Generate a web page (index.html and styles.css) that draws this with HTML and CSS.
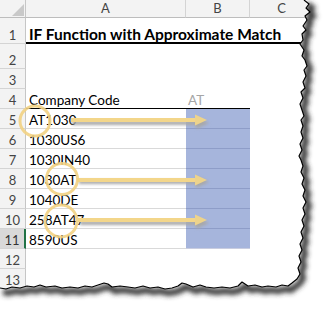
FILE: index.html
```html
<!DOCTYPE html>
<html>
<head>
<meta charset="utf-8">
<link rel="stylesheet" href="styles.css">
</head>
<body>
<div class="sheet">
  <div class="grid">
    <div class="corner"><span class="tri"></span></div>
    <div class="colhead">A</div>
    <div class="colhead">B</div>
    <div class="colhead">C</div>
    <div class="colhead"></div>

    <div class="rowhead">1</div>
    <div class="cell title r1">IF Function with Approximate Match</div>
    <div class="cell r1"></div>
    <div class="cell r1"></div>
    <div class="cell r1"></div>

    <div class="rowhead">2</div>
    <div class="cell"></div><div class="cell"></div><div class="cell"></div><div class="cell"></div>

    <div class="rowhead">3</div>
    <div class="cell"></div><div class="cell"></div><div class="cell"></div><div class="cell"></div>

    <div class="rowhead">4</div>
    <div class="cell hdr">Company Code</div>
    <div class="cell hdr grey">AT</div>
    <div class="cell"></div><div class="cell"></div>

    <div class="rowhead">5</div>
    <div class="cell data">AT1030</div><div class="cell blue"></div><div class="cell"></div><div class="cell"></div>

    <div class="rowhead">6</div>
    <div class="cell data">1030US6</div><div class="cell blue"></div><div class="cell"></div><div class="cell"></div>

    <div class="rowhead">7</div>
    <div class="cell data">1030IN40</div><div class="cell blue"></div><div class="cell"></div><div class="cell"></div>

    <div class="rowhead">8</div>
    <div class="cell data">1030AT</div><div class="cell blue"></div><div class="cell"></div><div class="cell"></div>

    <div class="rowhead">9</div>
    <div class="cell data">1040DE</div><div class="cell blue"></div><div class="cell"></div><div class="cell"></div>

    <div class="rowhead">10</div>
    <div class="cell data">258AT47</div><div class="cell blue"></div><div class="cell"></div><div class="cell"></div>

    <div class="rowhead sel">11</div>
    <div class="cell data active">8590US</div><div class="cell blue lastblue"></div><div class="cell"></div><div class="cell"></div>

    <div class="rowhead">12</div>
    <div class="cell"></div><div class="cell"></div><div class="cell"></div><div class="cell"></div>

    <div class="rowhead">13</div>
    <div class="cell"></div><div class="cell"></div><div class="cell"></div><div class="cell"></div>

    <div class="rowhead">14</div>
    <div class="cell"></div><div class="cell"></div><div class="cell"></div><div class="cell"></div>
  </div>

  <svg class="overlay" width="326" height="313" viewBox="0 0 326 313" xmlns="http://www.w3.org/2000/svg">
    <defs>
      <filter id="blur" x="-20%" y="-20%" width="140%" height="140%">
        <feGaussianBlur stdDeviation="2.4"/>
      </filter>
      <filter id="ashadow" x="-10%" y="-100%" width="120%" height="300%">
        <feGaussianBlur stdDeviation="1.6"/>
      </filter>
      <clipPath id="outside">
        <path id="outpath" d="M304 0 L309 4 L306 8 L310 12 L305 16 L307 20 L303 26 L306 30 L302 34 L303 40 L300 44 L304 50 L302 56 L305 60 L307 66 L304 70 L306 76 L303 82 L305 88 L301 92 L303 98 L300 104 L302 110 L304 116 L301 120 L303 126 L301 132 L303 138 L300 144 L302 150 L299 156 L301 160 L303 166 L301 172 L304 178 L302 184 L305 190 L303 196 L306 202 L303 208 L305 214 L302 220 L304 226 L301 232 L303 238 L300 244 L302 250 L299 256 L301 262 L298 268 L300 274 L297 279 L292 283 L288 286 L282 285 L276 287 L268 286 L262 287 L255 285 L248 286 L242 282 L238 286 L230 288 L222 287 L214 288 L206 287 L200 285 L193 287 L186 284 L182 283 L178 286 L172 288 L165 289 L158 287 L150 288 L143 286 L135 288 L128 287 L120 286 L112 287 L108 284 L104 283 L98 285 L92 287 L85 286 L78 288 L70 287 L62 288 L55 286 L46 287 L40 285 L34 287 L27 286 L20 288 L12 287 L6 289 L0 288 L0 313 L326 313 L326 0 Z"/>
      </clipPath>
    </defs>

    <!-- annotations -->
    <g class="shadowg" filter="url(#ashadow)">
      <path d="M72 123 H198 M79 182 H198 M80 223 H198" stroke="#a8a8a8" stroke-width="4" fill="none"/>
      <path d="M196 117 L209 123 L196 129 Z M196 176 L209 182 L196 188 Z M196 217 L209 223 L196 229 Z" fill="#a8a8a8"/>
    </g>
    <g class="arrows">
      <path d="M71 120 H198 M77 180 H198 M78 220 H198" stroke="#f3d68a" stroke-width="4" fill="none"/>
      <path d="M195 114.5 L207 120 L195 125.5 Z M195 174.5 L207 180 L195 185.5 Z M195 214.5 L207 220 L195 225.5 Z" fill="#edd38c"/>
    </g>
    <g class="circles" fill="none" stroke="#f2d183" stroke-width="3" stroke-opacity="0.9">
      <circle cx="35" cy="121" r="15"/>
      <circle cx="62" cy="179" r="15.5"/>
      <circle cx="61" cy="221" r="16"/>
    </g>

    <!-- torn edge -->
    <use href="#outpath" fill="#ffffff"/>
    <g clip-path="url(#outside)">
      <path class="tornshadow" d="M304 0 L309 4 L306 8 L310 12 L305 16 L307 20 L303 26 L306 30 L302 34 L303 40 L300 44 L304 50 L302 56 L305 60 L307 66 L304 70 L306 76 L303 82 L305 88 L301 92 L303 98 L300 104 L302 110 L304 116 L301 120 L303 126 L301 132 L303 138 L300 144 L302 150 L299 156 L301 160 L303 166 L301 172 L304 178 L302 184 L305 190 L303 196 L306 202 L303 208 L305 214 L302 220 L304 226 L301 232 L303 238 L300 244 L302 250 L299 256 L301 262 L298 268 L300 274 L297 279 L292 283 L288 286 L282 285 L276 287 L268 286 L262 287 L255 285 L248 286 L242 282 L238 286 L230 288 L222 287 L214 288 L206 287 L200 285 L193 287 L186 284 L182 283 L178 286 L172 288 L165 289 L158 287 L150 288 L143 286 L135 288 L128 287 L120 286 L112 287 L108 284 L104 283 L98 285 L92 287 L85 286 L78 288 L70 287 L62 288 L55 286 L46 287 L40 285 L34 287 L27 286 L20 288 L12 287 L6 289 L0 288" transform="translate(3 4)" fill="none" stroke="#333333" stroke-width="6" filter="url(#blur)"/>
    </g>
    <path d="M304 0 L309 4 L306 8 L310 12 L305 16 L307 20 L303 26 L306 30 L302 34 L303 40 L300 44 L304 50 L302 56 L305 60 L307 66 L304 70 L306 76 L303 82 L305 88 L301 92 L303 98 L300 104 L302 110 L304 116 L301 120 L303 126 L301 132 L303 138 L300 144 L302 150 L299 156 L301 160 L303 166 L301 172 L304 178 L302 184 L305 190 L303 196 L306 202 L303 208 L305 214 L302 220 L304 226 L301 232 L303 238 L300 244 L302 250 L299 256 L301 262 L298 268 L300 274 L297 279 L292 283 L288 286 L282 285 L276 287 L268 286 L262 287 L255 285 L248 286 L242 282 L238 286 L230 288 L222 287 L214 288 L206 287 L200 285 L193 287 L186 284 L182 283 L178 286 L172 288 L165 289 L158 287 L150 288 L143 286 L135 288 L128 287 L120 286 L112 287 L108 284 L104 283 L98 285 L92 287 L85 286 L78 288 L70 287 L62 288 L55 286 L46 287 L40 285 L34 287 L27 286 L20 288 L12 287 L6 289 L0 288" fill="none" stroke="#000000" stroke-width="1.2" stroke-linejoin="round"/>
  </svg>
</div>
</body>
</html>
```
FILE: styles.css
```css
* { box-sizing: border-box; }
html, body { margin: 0; padding: 0; background: #ffffff; }
.sheet {
  position: relative;
  width: 326px;
  height: 313px;
  overflow: hidden;
  font-family: Lato, "Liberation Sans", sans-serif;
  color: #000;
}
.grid {
  display: grid;
  grid-template-columns: 26px 160px 64px 64px 1fr;
  grid-template-rows: 18px 26px 25px repeat(12, 20px) 1fr;
  width: 326px;
  height: 313px;
}
.corner {
  position: relative;
  background: #f3f3f3;
  border-right: 1px solid #c6c6c6;
  border-bottom: 1px solid #bdbdbd;
}
.tri {
  position: absolute;
  right: 1px;
  bottom: 1px;
  width: 0;
  height: 0;
  border-left: 12px solid transparent;
  border-bottom: 12px solid #c9c9c9;
}
.colhead {
  background: #f3f3f3;
  border-right: 1px solid #d4d4d4;
  border-bottom: 1px solid #bdbdbd;
  font-size: 13px;
  line-height: 17px;
  text-align: center;
  color: #444;
}
.rowhead {
  background: #f3f3f3;
  border-right: 1px solid #c6c6c6;
  border-bottom: 1px solid #d4d4d4;
  font-size: 13px;
  line-height: 16px;
  color: #444;
  display: flex;
  align-items: flex-end;
  justify-content: center;
}
.rowhead.sel {
  background: #d9d9d9;
  border-right: 2px solid #217346;
  color: #333;
}
.cell {
  display: flex;
  align-items: flex-end;
  padding-left: 3px;
  font-size: 13.5px;
  line-height: 15px;
  white-space: nowrap;
}
.title {
  font-weight: bold;
  font-size: 15.5px;
  line-height: 16px;
  overflow: visible;
  position: relative;
  z-index: 1;
}
.r1 { border-bottom: 2px solid #000; }
.hdr { border-bottom: 1px solid #000; }
.grey { color: #a6a6a6; padding-left: 2px; }
.data { border-bottom: 1px solid #d9d9d9; }
.blue {
  background: #a6b5dc;
  border-bottom: 1px solid #8e9dc8;
}
.blue.lastblue { border-bottom: 1px solid #c9cde0; }
.overlay {
  position: absolute;
  left: 0;
  top: 0;
}
```
